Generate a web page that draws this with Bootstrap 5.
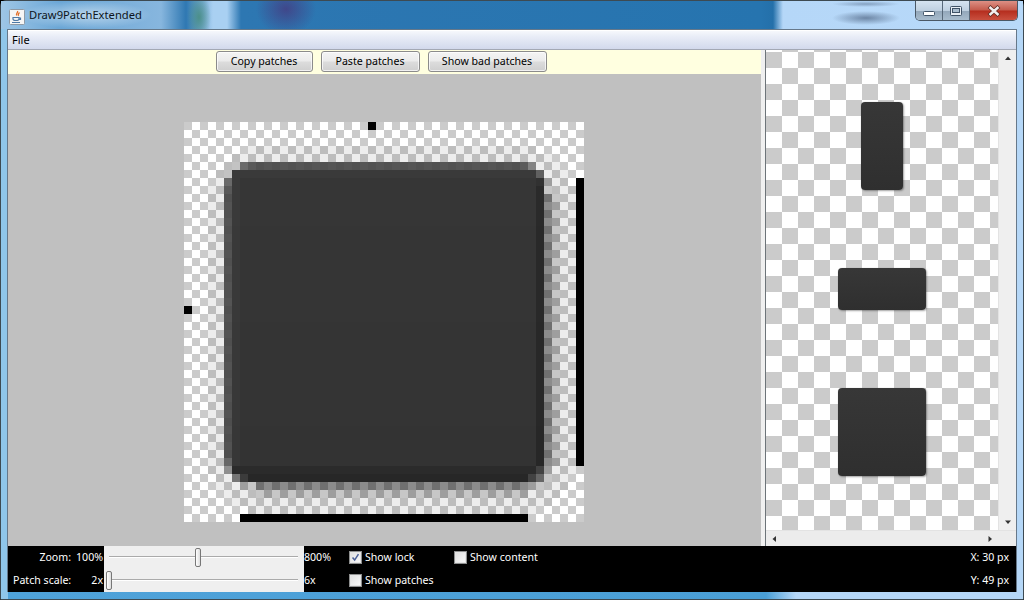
<!doctype html>
<html lang="en">
<head>
<meta charset="utf-8">
<title>Draw9PatchExtended</title>
<link href="https://cdn.jsdelivr.net/npm/bootstrap@5.3.0/dist/css/bootstrap.min.css" rel="stylesheet">
<style>
html,body{margin:0;width:1024px;height:600px;overflow:hidden;background:#000}
body{font-family:"Noto Sans","Liberation Sans",sans-serif;font-size:10.6px;line-height:1;color:#000}
.wnd{width:1024px;height:600px;border:1px solid #3d4a52;border-radius:6px 6px 0 0;
 background:linear-gradient(90deg,#8fc6ea 7px,#0000 7px),linear-gradient(90deg,#4fa2d9 0,#4a9fd6 765px,#b5d7f7 795px)}
.titlebar{height:28px;padding-left:8px;
 background:
 radial-gradient(ellipse 66px 14px at 85px 14px,rgba(255,255,255,.5),rgba(255,255,255,0) 100%),
 radial-gradient(ellipse 12px 24px at 198px 16px,rgba(70,140,125,.85),rgba(70,140,125,0) 100%),
 radial-gradient(ellipse 30px 26px at 285px 8px,rgba(70,55,125,.75),rgba(70,55,125,0) 100%),
 radial-gradient(ellipse 34px 7px at 865px 17px,rgba(60,80,110,.6),rgba(60,80,110,0) 100%),
 radial-gradient(ellipse 34px 3px at 865px 3px,rgba(60,80,110,.4),rgba(60,80,110,0) 100%),
 linear-gradient(90deg,#9ec6e6 0,#6aa6d6 60px,#87b6de 160px,#2f78b2 185px,#a9d0f2 212px,#a9d0f2 226px,#2d77b2 240px,#2674af 760px,#2470aa 772px,#b5d7f8 782px,#b8d9f9 100%)}
.app-ico{width:16px;height:16px}
.title-txt{font-size:11.2px;margin-left:4px;color:#0c1420}
.win-btns{height:20px;margin-right:5px;border:1px solid #4a5866;border-top:0;border-radius:0 0 5px 5px;overflow:hidden}
.win-btn{width:27px}
.win-min,.win-max{background:linear-gradient(#d5e3f0 0,#bfd0e0 50%,#93a7ba 52%,#a8bccd 100%);border-right:1px solid #58697a}
.win-close{width:47px;background:linear-gradient(#dd9085 0,#c45a4b 48%,#b52d1e 52%,#c9503f 100%)}
.client{margin:0 6px 7px 6px;border:1px solid #66788a;border-bottom:0}
.menubar{height:20px;padding:3px 4px 0;font-size:11px;background:linear-gradient(#f6f8fc 0,#e9edf7 30%,#d2d9ec 100%);border-bottom:1px solid #a3a8b4;border-top:1px solid #fff}
.leftpane{width:753px}
.toolbar{height:24px;background:#ffffe0;gap:8px;padding:0 6px 1px 0}
.pbtn{height:21px;padding:0 1px 0 0;font-size:10.6px;line-height:19px;color:#000;border:1px solid #8b8b8b;border-radius:3px;
 background:linear-gradient(#f4f4f4 0,#ebebeb 48%,#dcdcdc 52%,#cfcfcf 100%);box-shadow:inset 0 0 0 1px rgba(255,255,255,.7)}
.b-copy{width:97px}.b-paste{width:99px}.b-bad{width:119px}
.editor{background:#c0c0c0;padding:48px 1px 0 0}
.editor canvas{width:400px;height:400px;image-rendering:pixelated;display:block}
.splitter{width:4px;background:#f0f0f0}
.rightpane{border-left:1px solid #6d7479;background:#f0f0f0}
.preview{width:232px;padding-top:52px;gap:78px;
 background-color:#fff;
 background-image:linear-gradient(45deg,#cbcbcb 25%,#0000 25%,#0000 75%,#cbcbcb 75%),linear-gradient(45deg,#cbcbcb 25%,#0000 25%,#0000 75%,#cbcbcb 75%);
 background-size:32px 32px;background-position:16px 2px,32px 18px}
.thumb{background:linear-gradient(#373737,#2f2f2f);border-radius:4px;box-shadow:1px 1px 2px rgba(0,0,0,.35),0 0 1px rgba(0,0,0,.2)}
.t-tall{width:42px;height:88px}
.t-wide{width:88px;height:42px}
.t-sq{width:88px;height:88px}
.vscroll{width:18px;background:#efefef;border-left:1px solid #e3e3e3}
.hscroll{height:16px;background:#ececec;border-top:1px solid #e3e3e3}
.arrow{width:8px;height:8px;display:block}
.status{height:46px;background:#000;color:#fff;display:grid;grid-template-columns:63px 33px 200px 45px 105px 1fr auto;grid-template-rows:23px 23px}
.status>div{display:flex;align-items:center;white-space:nowrap;padding-bottom:1px}
.cell-r{justify-content:flex-end}
.cell-v{padding-right:1px}
.lbl-patch{padding-left:5px}
.status>.slider-cell{background:#efefef;position:relative;padding:0}
.track{position:absolute;left:5px;right:6px;top:10px;height:2px;background:linear-gradient(#aaa 50%,#fff 50%)}
.knob{position:absolute;top:2px;width:6px;height:19px;border:1px solid #777;border-radius:2px;background:linear-gradient(90deg,#fff,#ddd)}
.cbox{width:13px;height:13px;border:1px solid #8e8f8f;background:linear-gradient(135deg,#dedede,#fafafa);box-shadow:inset 0 0 0 1px #e4e4e4;margin-right:3px;flex:none;display:block}
.coord{padding-right:7px}
</style>
</head>
<body>
<div class="wnd d-flex flex-column">
  <div class="titlebar d-flex align-items-start flex-shrink-0">
    <svg class="app-ico mt-2 flex-shrink-0" viewBox="0 0 16 16">
      <rect x=".5" y=".5" width="15" height="15" rx="1" fill="#f5f5f5" stroke="#8f9aa5"/>
      <path d="M8.500 2c1 1.500-2 2.500-.8 4.500M10.500 3.500c-1 1-2 2-.8 3.200" fill="none" stroke="#e2702a" stroke-width="1.300"/>
      <path d="M4 8.500h6v1.500c0 1-1 1.500-3 1.500S4 11 4 10zM10 9h1.500v1.500H10" fill="none" stroke="#4f7aa6" stroke-width="1.200"/>
      <path d="M3 13.500h8" stroke="#4f7aa6"/>
    </svg>
    <span class="title-txt mt-2">Draw9PatchExtended</span>
    <div class="win-btns d-flex ms-auto">
      <div class="win-btn win-min d-flex align-items-end justify-content-center pb-1"><svg width="12" height="5" viewBox="0 0 12 5"><rect x=".5" y=".5" width="11" height="4" rx="1" fill="#fff" stroke="#3f5266"/></svg></div>
      <div class="win-btn win-max d-flex align-items-center justify-content-center"><svg width="12" height="10" viewBox="0 0 12 10"><rect x=".5" y=".5" width="11" height="9" rx="1" fill="#e8eef4" stroke="#3f5266"/><rect x="2.500" y="2.500" width="7" height="4" fill="#a9bccd" stroke="#3f5266"/></svg></div>
      <div class="win-btn win-close d-flex align-items-center justify-content-center"><svg width="14" height="12" viewBox="0 0 14 12"><path d="M2 1.500l10 9M12 1.500l-10 9" stroke="#5c2a22" stroke-width="4"/><path d="M2.500 2l9 8M11.500 2l-9 8" stroke="#f2eeee" stroke-width="2.400"/></svg></div>
    </div>
  </div>
  <div class="client flex-grow-1 d-flex flex-column">
    <div class="menubar flex-shrink-0"><span>File</span></div>
    <div class="d-flex flex-grow-1" style="min-height:0">
      <div class="leftpane d-flex flex-column flex-shrink-0">
        <div class="toolbar d-flex justify-content-center align-items-center flex-shrink-0">
          <button class="btn pbtn b-copy" type="button">Copy patches</button>
          <button class="btn pbtn b-paste" type="button">Paste patches</button>
          <button class="btn pbtn b-bad" type="button">Show bad patches</button>
        </div>
        <div class="editor flex-grow-1 d-flex justify-content-center align-items-start">
          <canvas id="pix" width="50" height="50"></canvas>
        </div>
      </div>
      <div class="splitter flex-shrink-0"></div>
      <div class="rightpane flex-grow-1 d-flex flex-column">
        <div class="d-flex flex-grow-1" style="min-height:0">
          <div class="preview d-flex flex-column align-items-center flex-shrink-0">
            <div class="thumb t-tall"></div>
            <div class="thumb t-wide"></div>
            <div class="thumb t-sq"></div>
          </div>
          <div class="vscroll flex-grow-1 d-flex flex-column justify-content-between align-items-center py-1">
            <svg class="arrow" viewBox="0 0 8 8"><path d="M1 6h6L4 2.500z" fill="#333"/></svg>
            <svg class="arrow" viewBox="0 0 8 8"><path d="M1 2.500h6L4 6z" fill="#333"/></svg>
          </div>
        </div>
        <div class="hscroll d-flex justify-content-between align-items-center flex-shrink-0 ps-1" style="padding-right:22px">
          <svg class="arrow" viewBox="0 0 8 8"><path d="M6 1v6L2.500 4z" fill="#333"/></svg>
          <svg class="arrow" viewBox="0 0 8 8"><path d="M2.500 1v6L6 4z" fill="#333"/></svg>
        </div>
      </div>
    </div>
    <div class="status flex-shrink-0">
      <div class="cell-r">Zoom:</div>
      <div class="cell-r cell-v">100%</div>
      <div class="slider-cell"><span class="track"></span><span class="knob" style="left:91px"></span></div>
      <div>800%</div>
      <div><svg class="cbox" viewBox="0 0 13 13"><path d="M3 6.500l2.500 3L10 2.500" fill="none" stroke="#4a5f97" stroke-width="1.800"/></svg>Show lock</div>
      <div><span class="cbox"></span>Show content</div>
      <div class="cell-r coord">X: 30 px</div>
      <div class="lbl-patch">Patch scale:</div>
      <div class="cell-r cell-v">2x</div>
      <div class="slider-cell"><span class="track"></span><span class="knob" style="left:2px"></span></div>
      <div>6x</div>
      <div><span class="cbox"></span>Show patches</div>
      <div></div>
      <div class="cell-r coord">Y: 49 px</div>
    </div>
  </div>
</div>
<script>
(function(){
  var ctx=document.getElementById('pix').getContext('2d');
  function rr(x,y,x0,y0,x1,y1,r){
    var cx=(x0+x1)/2,cy=(y0+y1)/2,hx=(x1-x0)/2-r,hy=(y1-y0)/2-r;
    var qx=Math.abs(x-cx)-hx,qy=Math.abs(y-cy)-hy;
    return Math.hypot(Math.max(qx,0),Math.max(qy,0))+Math.min(Math.max(qx,qy),0)-r;
  }
  function cl(v){return Math.max(0,Math.min(1,v));}
  for(var r=0;r<50;r++)for(var c=0;c<50;c++){
    var bg=((c+r)%2===0)?203:255;
    var px=c+.5,py=r+.5;
    var ds=rr(px,py,6,6,46,46,5);
    var sa=ds>3?0:(ds<-1?.55:[.45,.22,.07][Math.max(0,Math.min(2,Math.round(ds+.5)))]);
    var v=bg*(1-sa);
    var rad=(c>25&&r>25)?2.6:((c>25)?3:3.5);
    var db=rr(px,py,5.1,5.1,45,45,rad);
    var ba=cl(.5-db);
    var body=54;
    if(c>=44||r>=44)body=42;
    else if(r>=43)body=46;
    else if(r===5||c===5)body=72;
    else if(c===6||r===6)body=58;
    body=body-(r-6)*.08;
    v=v*(1-ba)+body*ba;
    v=Math.round(v);
    ctx.fillStyle='rgb('+v+','+v+','+v+')';
    ctx.fillRect(c,r,1,1);
  }
  ctx.fillStyle='#000';
  ctx.fillRect(23,0,1,1);
  ctx.fillRect(0,23,1,1);
  ctx.fillRect(49,7,1,36);
  ctx.fillRect(7,49,36,1);
})();
</script>
<script src="https://cdn.jsdelivr.net/npm/bootstrap@5.3.0/dist/js/bootstrap.bundle.min.js"></script>
</body>
</html>
